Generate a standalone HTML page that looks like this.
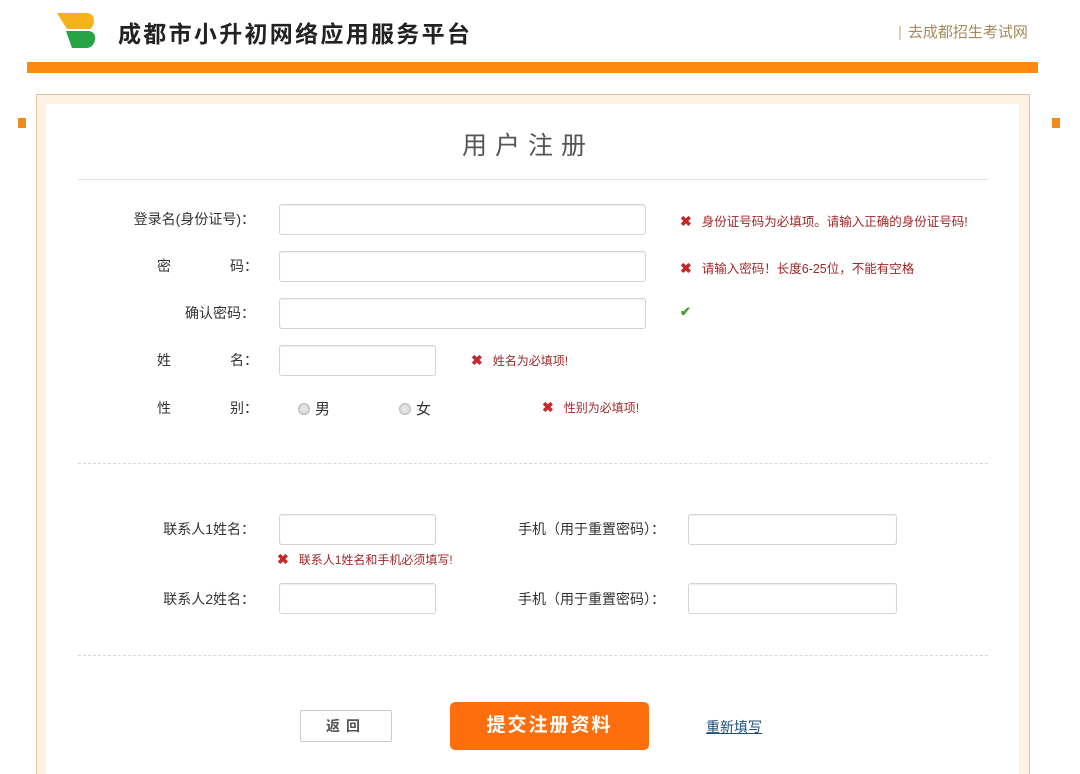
<!DOCTYPE html>
<html><head><meta charset="utf-8"><style>
*{margin:0;padding:0;box-sizing:border-box}
html,body{width:1080px;height:774px;overflow:hidden}
body{background:#fff;position:relative;font-family:"Liberation Sans","Noto Sans CJK SC",sans-serif;color:#333}
.a{position:absolute;white-space:nowrap}
.inp{position:absolute;height:31px;border:1px solid #d4d4d4;border-radius:3px;background:#fff;box-shadow:inset 0 1px 1px #eee}
.lab{position:absolute;font-size:14px;color:#333;text-align:right}
.err{position:absolute;font-size:12px;color:#a0282a;white-space:nowrap}
.x{color:#c62828;font-size:14px;font-weight:bold;margin-right:10px}
.dash{position:absolute;left:78px;width:910px;border-top:1px dashed #d8d8d8}
.rad{display:inline-block;width:12px;height:12px;border-radius:50%;border:1px solid #bbb;background:radial-gradient(#eee,#ccc);vertical-align:-1px;margin-right:5px}
</style></head><body>
<svg class="a" style="left:56px;top:11px" width="42" height="40" viewBox="0 0 42 40">
<path d="M1 2 H30 Q38 2 38 10 Q38 15 34 18 H11 Z" fill="#f6b21c"/>
<path d="M10 20 H33 Q40 21 39 29 Q37 37 30 37 H16 Z" fill="#26a345"/>
</svg>
<div class="a" style="left:118px;top:15px;font-size:23px;font-weight:bold;color:#222;letter-spacing:2.3px">成都市小升初网络应用服务平台</div>
<div class="a" style="left:898px;top:21px;font-size:15px;color:#a8895a"><span style="color:#c8b08a;margin-right:6px">|</span>去成都招生考试网</div>
<div class="a" style="left:27px;top:62px;width:1011px;height:11px;background:#fb8a12"></div>
<div class="a" style="left:18px;top:118px;width:8px;height:10px;background:#f08a1a"></div>
<div class="a" style="left:1052px;top:118px;width:8px;height:10px;background:#f08a1a"></div>
<div class="a" style="left:36px;top:94px;width:994px;height:690px;border:1px solid #e2c49c;background:#fdf1e4"></div>
<div class="a" style="left:46px;top:104px;width:973px;height:670px;background:#fff"></div>
<div class="a" style="left:462px;top:126px;font-size:25px;color:#555;letter-spacing:8px">用户注册</div>
<div class="a" style="left:78px;top:179px;width:910px;border-top:1px solid #e2e2e2"></div>

<div class="lab" style="left:100px;top:209px;width:155px">登录名(身份证号)：</div>
<div class="inp" style="left:279px;top:204px;width:367px"></div>
<div class="err" style="left:680px;top:211px;font-size:12.5px"><span class="x">✖</span>身份证号码为必填项。请输入正确的身份证号码!</div>

<div class="a lab" style="left:157px;top:256px">密</div>
<div class="a lab" style="left:230px;top:256px">码：</div>
<div class="inp" style="left:279px;top:251px;width:367px"></div>
<div class="err" style="left:680px;top:258px;font-size:12.5px"><span class="x">✖</span>请输入密码！长度6-25位，不能有空格</div>

<div class="lab" style="left:100px;top:303px;width:155px">确认密码：</div>
<div class="inp" style="left:279px;top:298px;width:367px"></div>
<div class="a" style="left:680px;top:304px;color:#4a9a2a;font-size:13px;font-weight:bold">✔</div>

<div class="a lab" style="left:157px;top:350px">姓</div>
<div class="a lab" style="left:230px;top:350px">名：</div>
<div class="inp" style="left:279px;top:345px;width:157px"></div>
<div class="err" style="left:471px;top:352px"><span class="x">✖</span>姓名为必填项!</div>

<div class="a lab" style="left:157px;top:398px">性</div>
<div class="a lab" style="left:230px;top:398px">别：</div>
<div class="a" style="left:298px;top:398px;font-size:15px"><span class="rad"></span>男</div>
<div class="a" style="left:399px;top:398px;font-size:15px"><span class="rad"></span>女</div>
<div class="err" style="left:542px;top:399px"><span class="x">✖</span>性别为必填项!</div>

<div class="dash" style="top:463px"></div>

<div class="lab" style="left:100px;top:519px;width:155px">联系人1姓名：</div>
<div class="inp" style="left:279px;top:514px;width:157px"></div>
<div class="lab" style="left:440px;top:519px;width:225px">手机（用于重置密码）：</div>
<div class="inp" style="left:688px;top:514px;width:209px"></div>
<div class="err" style="left:277px;top:551px"><span class="x">✖</span>联系人1姓名和手机必须填写!</div>

<div class="lab" style="left:100px;top:589px;width:155px">联系人2姓名：</div>
<div class="inp" style="left:279px;top:583px;width:157px"></div>
<div class="lab" style="left:440px;top:589px;width:225px">手机（用于重置密码）：</div>
<div class="inp" style="left:688px;top:583px;width:209px"></div>

<div class="dash" style="top:655px"></div>

<div class="a" style="left:300px;top:710px;width:92px;height:32px;border:1px solid #ccc;border-radius:2px;text-align:center;line-height:30px;font-size:14px;font-weight:bold;color:#555;letter-spacing:6px">返回</div>
<div class="a" style="left:450px;top:702px;width:199px;height:48px;background:#fc6f0c;border-radius:5px;text-align:center;line-height:48px;font-size:19px;font-weight:bold;color:#fff;letter-spacing:2px">提交注册资料</div>
<div class="a" style="left:706px;top:717px;font-size:14px;color:#1f4e79;text-decoration:underline">重新填写</div>
</body></html>
